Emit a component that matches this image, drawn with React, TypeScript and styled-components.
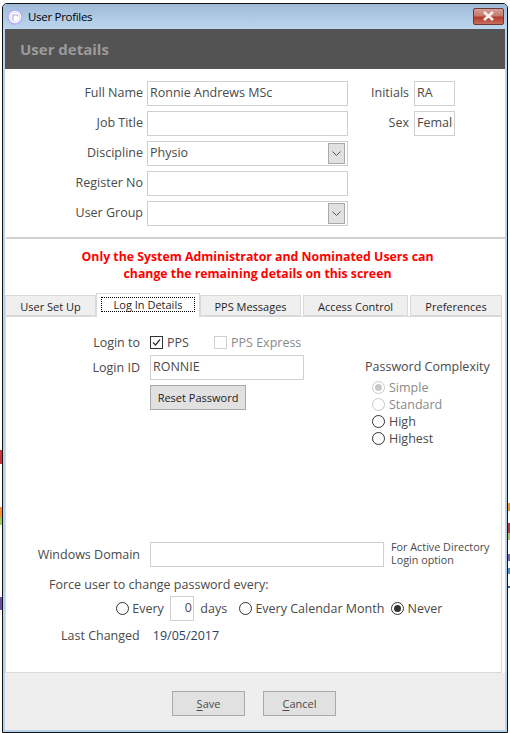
// App.tsx
import React from 'react'
import styled, { createGlobalStyle } from 'styled-components'

const fontStack = `'Open Sans', 'Noto Sans', sans-serif`

const GlobalStyle = createGlobalStyle`
  html, body {
    margin: 0;
    padding: 0;
    background: #fff;
  }
  body {
    font-family: ${fontStack};
    font-size: 12px;
    color: #4a4a4a;
  }
`

const Desktop = styled.div`
  position: relative;
  width: 510px;
  height: 733px;
  overflow: hidden;
  background: #fff;
  padding: 3px 2px 0 2px;
  box-sizing: border-box;
`

// bits of other windows showing behind the dialog
const Peek = styled.div<{ $side: 'left' | 'right'; $top: number; $h: number; $color: string }>`
  position: absolute;
  ${(p) => (p.$side === 'left' ? 'left: 0;' : 'right: 0;')}
  top: ${(p) => p.$top}px;
  width: 2px;
  height: ${(p) => p.$h}px;
  background: ${(p) => p.$color};
`

const Window = styled.div`
  width: 506px;
  height: 730px;
  box-sizing: border-box;
  border: 1px solid #111;
  border-radius: 5px 5px 0 0;
  background: #b9d3ec;
  padding: 0 2px 2px 2px;
  display: flex;
  flex-direction: column;
`

const TitleBar = styled.div`
  height: 25px;
  flex: none;
  margin: 0 -2px;
  padding: 0 3px 0 4px;
  display: flex;
  align-items: center;
  gap: 5px;
  background: linear-gradient(#9fbbd8, #bcd6ef);
  border-radius: 4px 4px 0 0;
`

const TitleText = styled.span`
  font-size: 11.5px;
  color: #000;
  letter-spacing: -0.3px;
`

const CloseButton = styled.div`
  margin-left: auto;
  margin-top: -1px;
  width: 31px;
  height: 17px;
  box-sizing: border-box;
  border: 1px solid #6e3a36;
  border-radius: 2px;
  background: linear-gradient(#d4a097 0%, #c8796c 45%, #b33a2b 55%, #c66f5e 100%);
  display: flex;
  align-items: center;
  justify-content: center;
`

const Client = styled.div`
  flex: 1;
  display: flex;
  flex-direction: column;
  background: #fff;
  min-height: 0;
`

const Banner = styled.div`
  height: 40px;
  flex: none;
  background: #535353;
  display: flex;
  align-items: center;
  padding-left: 15px;
  font-size: 15px;
  font-weight: 700;
  color: #9b9b9b;
`

const FormGrid = styled.div`
  flex: none;
  display: grid;
  grid-template-columns: 141px 201px 66px 41px;
  grid-auto-rows: 25px;
  row-gap: 5px;
  column-gap: 0;
  padding: 12px 0 11px 0;
  align-items: center;
  border-bottom: 2px solid #cfcfcf;
  margin-left: 1px;
`

const FieldLabel = styled.label<{ $wide?: boolean }>`
  text-align: right;
  padding-right: ${(p) => (p.$wide ? 5 : 4)}px;
  padding-bottom: 2px;
  font-size: 12.5px;
  color: #4a4a4a;
  white-space: nowrap;
`

const TextInput = styled.input<{ $width?: number; $align?: string }>`
  box-sizing: border-box;
  width: ${(p) => (p.$width ? `${p.$width}px` : '100%')};
  height: 25px;
  border: 1px solid #cfcfcf;
  outline: none;
  padding: 0 1px 2px 2px;
  margin: 0;
  background: #fff;
  font-family: ${fontStack};
  font-size: 12.5px;
  color: #4a4a4a;
  text-align: ${(p) => p.$align || 'left'};
`

const Combo = styled.div`
  box-sizing: border-box;
  width: 100%;
  height: 25px;
  border: 1px solid #cfcfcf;
  padding: 1px 2px 1px 2px;
  display: flex;
  align-items: center;
  justify-content: space-between;
  font-size: 12.5px;
  color: #4a4a4a;
`

const ComboText = styled.span`
  margin-top: -2px;
`

const ComboButton = styled.div`
  width: 17px;
  height: 21px;
  box-sizing: border-box;
  border: 1px solid #a9a9a9;
  background: #e1e1e1;
  display: flex;
  align-items: center;
  justify-content: center;
`

const Notice = styled.div`
  flex: none;
  padding: 9px 0 0 5px;
  text-align: center;
  color: #f00;
  font-size: 12.3px;
  font-weight: 700;
  line-height: 17px;
  height: 54px;
  box-sizing: border-box;
`

const TabBar = styled.div`
  flex: none;
  height: 23px;
  display: flex;
  align-items: flex-end;
  gap: 2px;
  position: relative;
  z-index: 1;
`

const Tab = styled.div<{ $width: number; $active?: boolean }>`
  box-sizing: border-box;
  width: ${(p) => p.$width}px;
  margin-right: ${(p) => (p.$active ? -2 : 0)}px;
  margin-left: ${(p) => (p.$active ? -2 : 0)}px;
  height: ${(p) => (p.$active ? 24 : 21)}px;
  margin-bottom: ${(p) => (p.$active ? -1 : 0)}px;
  border: 1px solid #d9d9d9;
  border-bottom: ${(p) => (p.$active ? 'none' : '1px solid #d9d9d9')};
  background: ${(p) => (p.$active ? '#fff' : '#efefef')};
  color: #1f1f1f;
  font-size: 11px;
  display: flex;
  align-items: center;
  justify-content: center;
  padding-top: ${(p) => (p.$active ? 0 : 2)}px;
`

const FocusRect = styled.span`
  border: 1px dotted #000;
  padding: 0 4px;
  width: 94px;
  height: 15px;
  box-sizing: border-box;
  display: flex;
  align-items: center;
  justify-content: center;
  margin-bottom: 3px;
  white-space: nowrap;
`

const TabPanel = styled.div`
  flex: none;
  width: 497px;
  height: 357px;
  box-sizing: border-box;
  border: 1px solid #d9d9d9;
  display: flex;
  flex-direction: column;
`

const LoginSection = styled.div`
  height: 225px;
  flex: none;
  display: flex;
`

const LoginGrid = styled.div`
  width: 359px;
  flex: none;
  display: grid;
  grid-template-columns: 134px auto;
  grid-auto-rows: min-content;
  column-gap: 10px;
  row-gap: 3px;
  padding-top: 15px;
  align-items: center;
`

const PanelLabel = styled.div`
  text-align: right;
  font-size: 12.5px;
  color: #4a4a4a;
  white-space: nowrap;
`

const CheckRow = styled.div`
  display: flex;
  align-items: center;
  height: 20px;
`

const CheckOption = styled.span<{ $disabled?: boolean; $width?: number }>`
  display: inline-flex;
  align-items: center;
  gap: 4px;
  width: ${(p) => (p.$width ? `${p.$width}px` : 'auto')};
  font-size: 12.5px;
  color: ${(p) => (p.$disabled ? '#8a8a8a' : '#4a4a4a')};
`

const CheckBox = styled.span<{ $disabled?: boolean }>`
  width: 13px;
  height: 13px;
  box-sizing: border-box;
  border: 1px solid ${(p) => (p.$disabled ? '#d0d0d0' : '#333')};
  display: inline-flex;
  align-items: center;
  justify-content: center;
  flex: none;
`

const PushButton = styled.div`
  width: 96px;
  height: 25px;
  margin-top: 2px;
  box-sizing: border-box;
  border: 1px solid #a9a9a9;
  background: #e1e1e1;
  color: #222;
  font-size: 11px;
  display: flex;
  align-items: center;
  justify-content: center;
`

const Complexity = styled.div`
  padding-top: 41px;
  display: flex;
  flex-direction: column;
`

const ComplexityTitle = styled.div`
  font-size: 12.5px;
  line-height: 18px;
  color: #4a4a4a;
  margin-bottom: 3px;
  white-space: nowrap;
`

const RadioList = styled.div`
  padding-left: 7px;
  display: flex;
  flex-direction: column;
`

const RadioOption = styled.span<{ $disabled?: boolean }>`
  display: inline-flex;
  align-items: center;
  gap: 4px;
  height: 17px;
  font-size: 12.5px;
  color: ${(p) => (p.$disabled ? '#8a8a8a' : '#4a4a4a')};
  white-space: nowrap;
`

const RadioCircle = styled.span<{ $disabled?: boolean; $checked?: boolean }>`
  width: 13px;
  height: 13px;
  box-sizing: border-box;
  border: 1px solid ${(p) => (p.$disabled ? '#c8c8c8' : '#333')};
  border-radius: 50%;
  flex: none;
  display: inline-flex;
  align-items: center;
  justify-content: center;
  &::after {
    content: '';
    display: ${(p) => (p.$checked ? 'block' : 'none')};
    width: 7px;
    height: 7px;
    border-radius: 50%;
    background: ${(p) => (p.$disabled ? '#c8c8c8' : '#333')};
  }
`

const DomainRow = styled.div`
  flex: none;
  display: flex;
  align-items: center;
  height: 25px;
`

const DomainLabel = styled(PanelLabel)`
  width: 134px;
  margin-right: 10px;
`

const DomainHint = styled.div`
  margin: -2px 0 2px 7px;
  font-size: 10.8px;
  line-height: 13px;
  color: #4a4a4a;
  white-space: nowrap;
`

const ForceText = styled.div`
  flex: none;
  margin: 8px 0 0 43px;
  height: 20px;
  line-height: 20px;
  font-size: 12.5px;
  color: #4a4a4a;
`

const ForceRow = styled.div`
  flex: none;
  display: flex;
  align-items: center;
  height: 26px;
  margin: 0 0 0 110px;
`

const ForceLabel = styled.span<{ $gap: number }>`
  margin-right: ${(p) => p.$gap}px;
  font-size: 12.5px;
  color: #4a4a4a;
  white-space: pre;
`

const ChangedRow = styled.div`
  flex: none;
  margin: 4px 0 0 55px;
  display: flex;
  height: 20px;
  align-items: center;
  font-size: 12.5px;
`

const ChangedDate = styled.span`
  margin-left: 13px;
  font-size: 12.5px;
  color: #2b3f5c;
`

const Footer = styled.div`
  flex: 1;
  background: #eeeeee;
  display: flex;
  align-items: flex-start;
  justify-content: center;
  gap: 18px;
  padding: 18px 2px 0 0;
`

const FooterButton = styled.div`
  width: 73px;
  height: 25px;
  box-sizing: border-box;
  border: 1px solid #a9a9a9;
  background: #e1e1e1;
  color: #4a4a4a;
  font-size: 11px;
  display: flex;
  align-items: center;
  justify-content: center;
  u {
    text-underline-offset: 2px;
  }
`

const Chevron = () => (
  <svg width="9" height="5" viewBox="0 0 9 5">
    <path d="M0.5 0.5 L4.5 4.5 L8.5 0.5" fill="none" stroke="#555" strokeWidth="1" />
  </svg>
)

const AppIcon = () => (
  <svg width="16" height="16" viewBox="0 0 16 16">
    <circle cx="8" cy="8" r="7" fill="#fff" stroke="#b4aef0" strokeWidth="1.6" />
    <circle cx="8" cy="8" r="4.8" fill="none" stroke="#cfcbf5" strokeWidth="0.8" />
    <path d="M6 11.5 V6 H9.6 Q10.8 6 10.8 7.4" fill="none" stroke="#a9a3ec" strokeWidth="1.1" />
  </svg>
)

const peeks = [
  { side: 'left', top: 450, h: 14, color: '#c4373f' },
  { side: 'left', top: 507, h: 10, color: '#f59331' },
  { side: 'left', top: 517, h: 8, color: '#a5c96a' },
  { side: 'left', top: 597, h: 13, color: '#6a4fa3' },
  { side: 'right', top: 503, h: 8, color: '#f59331' },
  { side: 'right', top: 523, h: 10, color: '#c4373f' },
  { side: 'right', top: 533, h: 7, color: '#a5c96a' },
  { side: 'right', top: 554, h: 7, color: '#7b5fb3' },
  { side: 'right', top: 568, h: 6, color: '#4f90d0' },
  { side: 'right', top: 586, h: 2, color: '#3a5f8f' },
] as const

export default function App() {
  return (
    <Desktop>
      <GlobalStyle />
      {peeks.map((p) => (
        <Peek key={p.side + p.top} $side={p.side} $top={p.top} $h={p.h} $color={p.color} />
      ))}
      <Window>
        <TitleBar>
          <AppIcon />
          <TitleText>User Profiles</TitleText>
          <CloseButton>
            <svg width="15" height="10" viewBox="0 0 15 10">
              <path d="M3 1 L12 9 M12 1 L3 9" stroke="#f4f0ee" strokeWidth="2.6" />
            </svg>
          </CloseButton>
        </TitleBar>
        <Client>
          <Banner>User details</Banner>
          <FormGrid>
            <FieldLabel>Full Name</FieldLabel>
            <TextInput readOnly value="Ronnie Andrews MSc" />
            <FieldLabel $wide>Initials</FieldLabel>
            <TextInput readOnly value="RA" />

            <FieldLabel>Job Title</FieldLabel>
            <TextInput readOnly value="" />
            <FieldLabel $wide>Sex</FieldLabel>
            <TextInput readOnly value="Female" />

            <FieldLabel>Discipline</FieldLabel>
            <Combo>
              <ComboText>Physio</ComboText>
              <ComboButton>
                <Chevron />
              </ComboButton>
            </Combo>
            <span />
            <span />

            <FieldLabel>Register No</FieldLabel>
            <TextInput readOnly value="" />
            <span />
            <span />

            <FieldLabel>User Group</FieldLabel>
            <Combo>
              <ComboText />
              <ComboButton>
                <Chevron />
              </ComboButton>
            </Combo>
          </FormGrid>

          <Notice>
            Only the System Administrator and Nominated Users can
            <br />
            change the remaining details on this screen
          </Notice>

          <TabBar>
            <Tab $width={91}>User Set Up</Tab>
            <Tab $width={104} $active>
              <FocusRect>Log In Details</FocusRect>
            </Tab>
            <Tab $width={101}>PPS Messages</Tab>
            <Tab $width={105}>Access Control</Tab>
            <Tab $width={92}>Preferences</Tab>
          </TabBar>

          <TabPanel>
            <LoginSection>
              <LoginGrid>
                <PanelLabel>Login to</PanelLabel>
                <CheckRow>
                  <CheckOption $width={64}>
                    <CheckBox>
                      <svg width="11" height="11" viewBox="0 0 11 11">
                        <path d="M2 5.5 L4.5 8 L9 2.5" fill="none" stroke="#333" strokeWidth="1.2" />
                      </svg>
                    </CheckBox>
                    PPS
                  </CheckOption>
                  <CheckOption $disabled>
                    <CheckBox $disabled />
                    PPS Express
                  </CheckOption>
                </CheckRow>

                <PanelLabel>Login ID</PanelLabel>
                <TextInput readOnly value="RONNIE" $width={154} />

                <span />
                <PushButton>Reset Password</PushButton>
              </LoginGrid>

              <Complexity>
                <ComplexityTitle>Password Complexity</ComplexityTitle>
                <RadioList>
                  <RadioOption $disabled>
                    <RadioCircle $disabled $checked />
                    Simple
                  </RadioOption>
                  <RadioOption $disabled>
                    <RadioCircle $disabled />
                    Standard
                  </RadioOption>
                  <RadioOption>
                    <RadioCircle />
                    High
                  </RadioOption>
                  <RadioOption>
                    <RadioCircle />
                    Highest
                  </RadioOption>
                </RadioList>
              </Complexity>
            </LoginSection>

            <DomainRow>
              <DomainLabel>Windows Domain</DomainLabel>
              <TextInput readOnly value="" $width={234} />
              <DomainHint>
                For Active Directory
                <br />
                Login option
              </DomainHint>
            </DomainRow>

            <ForceText>Force user to change password every:</ForceText>

            <ForceRow>
              <RadioOption>
                <RadioCircle />
              </RadioOption>
              <ForceLabel $gap={6}> Every</ForceLabel>
              <TextInput readOnly value="0" $width={24} $align="right" />
              <ForceLabel $gap={12}>  days</ForceLabel>
              <RadioOption>
                <RadioCircle />
              </RadioOption>
              <ForceLabel $gap={7}> Every Calendar Month</ForceLabel>
              <RadioOption>
                <RadioCircle $checked />
              </RadioOption>
              <ForceLabel $gap={0}> Never</ForceLabel>
            </ForceRow>

            <ChangedRow>
              Last Changed
              <ChangedDate>19/05/2017</ChangedDate>
            </ChangedRow>
          </TabPanel>

          <Footer>
            <FooterButton>
              <span>
                <u>S</u>ave
              </span>
            </FooterButton>
            <FooterButton>
              <span>
                <u>C</u>ancel
              </span>
            </FooterButton>
          </Footer>
        </Client>
      </Window>
    </Desktop>
  )
}
